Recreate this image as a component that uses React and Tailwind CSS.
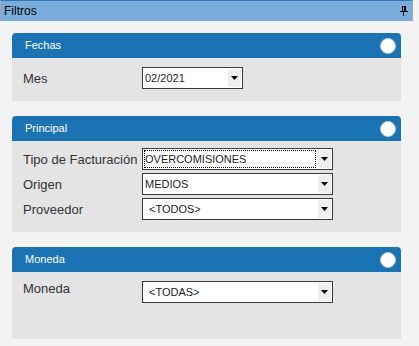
import React from 'react';

const Arrow = () => (
  <svg width="7" height="4" viewBox="0 0 7 4">
    <polygon points="0,0 7,0 3.5,4" fill="#000" />
  </svg>
);

const Pin = () => (
  <svg width="8" height="10" viewBox="0 0 8 10" shapeRendering="crispEdges">
    <rect x="2" y="0" width="4" height="1" fill="#000" />
    <rect x="2" y="0" width="1" height="6" fill="#000" />
    <rect x="4" y="0" width="2" height="6" fill="#000" />
    <rect x="0" y="5" width="8" height="1" fill="#000" />
    <rect x="3" y="6" width="1" height="4" fill="#000" />
  </svg>
);

function Select({ value, width, focused, indent }) {
  return (
    <div
      className={`${width} h-[22px] bg-white border border-[#3a3a3a] flex items-stretch p-[1px]`}
    >
      <div className="flex-1 flex items-center min-w-0">
        <span
          className={`h-full flex-1 flex items-center text-[11px] text-[#1e1e1e] leading-none ${
            focused ? 'border border-dotted border-black pl-0' : 'border border-transparent'
          } ${indent ? 'pl-[4px]' : ''}`}
        >
          {value}
        </span>
      </div>
      <div className="w-[13px] ml-[2px] bg-[#efefef] flex items-center justify-center">
        <Arrow />
      </div>
    </div>
  );
}

function Panel({ title, bodyHeight, pt, children }) {
  return (
    <div className="rounded-t-[4px] overflow-hidden">
      <div className="h-[25px] bg-[#1c73b4] flex items-center justify-between pl-[13px] pr-[5px]">
        <span className="text-[11px] text-white">{title}</span>
        <span className="w-[16px] h-[16px] rounded-full bg-white border border-[#b9c9da]"></span>
      </div>
      <div className={`bg-[#e4e4e4] px-[11px] ${bodyHeight} ${pt} flex flex-col gap-[3px]`}>
        {children}
      </div>
    </div>
  );
}

function Row({ label, children, top }) {
  return (
    <div className={`flex ${top ? 'items-start' : 'items-center'}`}>
      <span className={`w-[119px] text-[13px] text-[#333] leading-none ${top ? 'pt-[1px]' : ''}`}>
        {label}
      </span>
      {children}
    </div>
  );
}

export default function App() {
  return (
    <div className="w-full h-[346px] bg-[#f3f3f3]" style={{ fontFamily: '"Liberation Sans", Arial, sans-serif' }}>
      <div className="w-[413px]">
        <div className="h-[21px] border-t border-[#3377bb] border-x border-x-[#a8a8a8] bg-[#79aedc] flex items-center justify-between pl-[3px] pr-[4px]">
          <span className="text-[12px] text-black">Filtros</span>
          <Pin />
        </div>

        <div className="px-3 pt-[12px] flex flex-col gap-[15px]">
          <Panel title="Fechas" bodyHeight="h-[43px]" pt="pt-[9px]">
            <Row label="Mes">
              <Select value="02/2021" width="w-[101px]" />
            </Row>
          </Panel>

          <Panel title="Principal" bodyHeight="h-[91px]" pt="pt-[7px]">
            <Row label="Tipo de Facturación">
              <Select value="OVERCOMISIONES" width="w-[191px]" focused />
            </Row>
            <Row label="Origen">
              <Select value="MEDIOS" width="w-[191px]" />
            </Row>
            <Row label="Proveedor">
              <Select value="<TODOS>" width="w-[191px]" indent />
            </Row>
          </Panel>

          <Panel title="Moneda" bodyHeight="h-[67px]" pt="pt-[9px]">
            <Row label="Moneda" top>
              <Select value="<TODAS>" width="w-[191px]" indent />
            </Row>
          </Panel>
        </div>
      </div>
    </div>
  );
}
